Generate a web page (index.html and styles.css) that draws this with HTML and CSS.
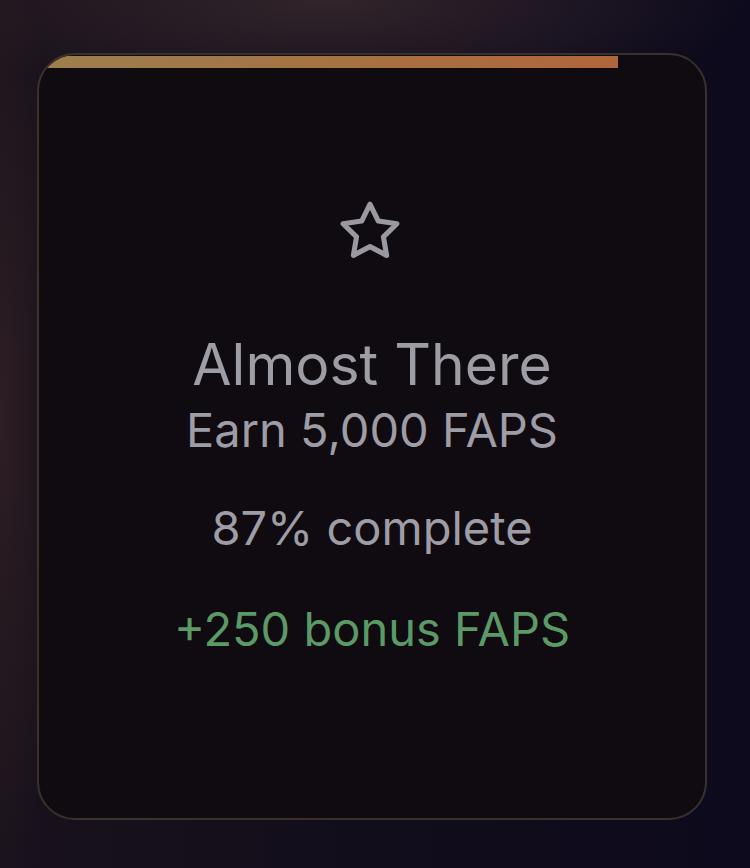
FILE: index.html
```html
<!DOCTYPE html>
<html lang="en">
  <head>
    <meta charset="UTF-8" />
    <meta name="viewport" content="width=device-width, initial-scale=1.0" />
    <title>Achievement</title>
    <link rel="stylesheet" href="styles.css">
  </head>
  <body>
    <div class="card">
      <div class="progress">
        <div class="progress-fill" style="width: 87%"></div>
      </div>

      <div class="card-body">
        <svg class="star" viewBox="0 0 24 24" width="70" height="70" fill="none" stroke="currentColor" stroke-width="1.75" stroke-linejoin="round" stroke-linecap="round">
          <path d="M12 2.8l2.85 5.78 6.38.93-4.62 4.5 1.09 6.35L12 17.36l-5.7 3 1.09-6.35-4.62-4.5 6.38-.93z" />
        </svg>

        <h2 class="title">Almost There</h2>
        <p class="goal">Earn 5,000 FAPS</p>
        <p class="status">87% complete</p>
        <p class="bonus">+250 bonus FAPS</p>
      </div>
    </div>
  </body>
</html>
```

FILE: styles.css
```css
:root {
  --text: #9e9ca5;
  --green: #5b9966;
  --border: #3a312c;
}

html {
  background: #120e1b;
}

body {
  margin: 0;
  min-height: 868px;
  padding: 53px 43px 0 37px;
  box-sizing: border-box;
  font-family: Inter, "Noto Sans", sans-serif;
  color: var(--text);
  background:
    radial-gradient(ellipse 420px 110px at 330px 0, rgba(60, 44, 48, 0.75), transparent),
    radial-gradient(ellipse 60px 500px at 0 420px, rgba(58, 38, 40, 0.6), transparent),
    linear-gradient(90deg, #19121c 0%, #120d1b 50%, #0d0a1d 100%);
}

.card {
  height: 767px;
  box-sizing: border-box;
  border: 2px solid var(--border);
  border-radius: 38px;
  background: #0f0b10;
  overflow: hidden;
}

.progress {
  height: 12px;
  margin-top: 1px;
  background: #0f0b10;
}

.progress-fill {
  height: 100%;
  background: linear-gradient(90deg, #9c7f4d, #b0663b);
}

.card-body {
  display: flex;
  flex-direction: column;
  align-items: center;
  padding-top: 128px;
}

.star {
  color: #9a98a0;
  margin-right: 4px;
}

.title {
  margin: 67px 0 0;
  font-size: 57px;
  font-weight: 400;
  line-height: 64px;
}

.goal {
  margin: 7px 0 0;
  font-size: 47px;
  line-height: 52px;
}

.status {
  margin: 46px 0 0;
  font-size: 47px;
  line-height: 52px;
}

.bonus {
  margin: 49px 0 0;
  font-size: 47px;
  line-height: 52px;
  color: var(--green);
}
```
